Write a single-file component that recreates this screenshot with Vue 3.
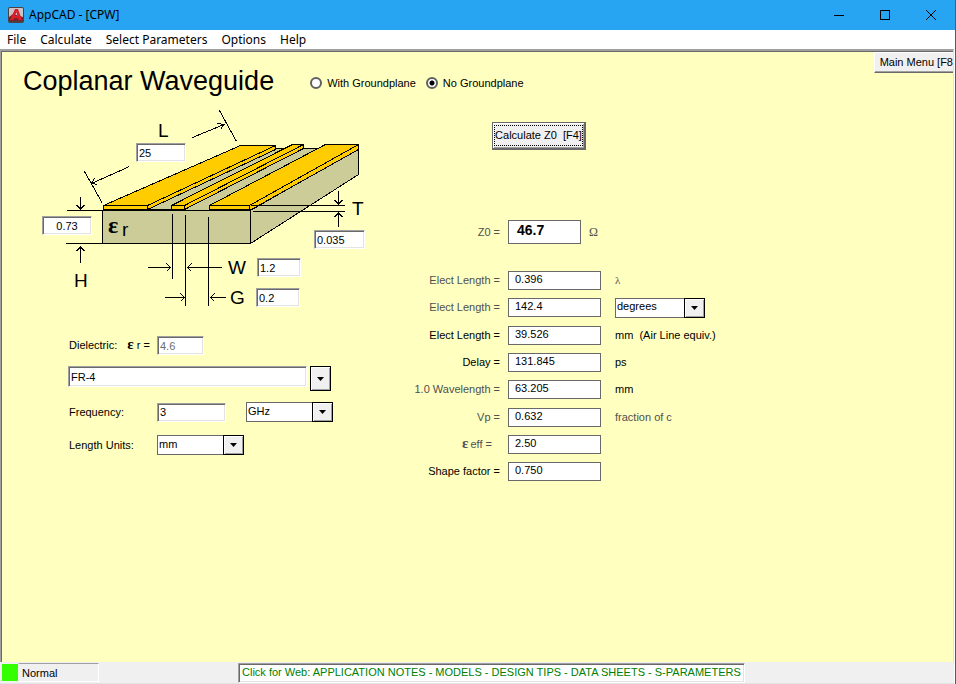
<script setup>
import { ref } from 'vue'

const menus = ['File', 'Calculate', 'Select Parameters', 'Options', 'Help']

const ground = ref('none')
const dims = ref([
  { id: 'length', name: 'L', value: '25' },
  { id: 'height', name: 'H', value: '0.73' },
  { id: 'thickness', name: 'T', value: '0.035' },
  { id: 'width', name: 'W', value: '1.2' },
  { id: 'space', name: 'G', value: '0.2' },
])

const er = ref('4.6')
const material = ref('FR-4')
const frequency = ref('3')
const frequencyUnit = ref('GHz')
const lengthUnit = ref('mm')
const angleUnit = ref('degrees')

const groups = [
  [
    { id: 'lambda', label: 'Elect Length =', value: '0.396', unit: 'λ', dim: true, serif: true },
    { id: 'angle', label: 'Elect Length =', value: '142.4', picker: true, dim: true },
  ],
  [
    { id: 'air', label: 'Elect Length =', value: '39.526', unit: 'mm  (Air Line equiv.)' },
    { id: 'delay', label: 'Delay =', value: '131.845', unit: 'ps' },
    { id: 'wave', label: '1.0 Wavelength =', value: '63.205', unit: 'mm', dim: true },
  ],
  [
    { id: 'vp', label: 'Vp =', value: '0.632', unit: 'fraction of c', dim: true, dimUnit: true },
    { id: 'eff', label: 'eff =', value: '2.50', epsilon: true, dim: true },
    { id: 'shape', label: 'Shape factor =', value: '0.750' },
  ],
]
</script>

<template>
  <div class="window">
    <header class="titlebar">
      <svg class="logo" viewBox="0 0 16 16" width="16" height="16" aria-hidden="true">
        <rect width="16" height="16" rx="2" fill="#4b4044" />
        <rect x="1" y="1" width="14" height="13" rx="1" fill="#c9c4c8" />
        <path d="M1 14V10l4-3 10 3v4z" fill="#7d2128" />
        <path d="M7 2H10L14 13H10.500L10 11H6.500L5 13H2Z M8.500 5L7 9H9.500Z" fill="#d81f2a" fill-rule="evenodd" />
      </svg>
      <span class="caption">AppCAD - [CPW]</span>
      <div class="controls">
        <button type="button" aria-label="Minimize">
          <svg viewBox="0 0 10 10" width="10" height="10"><path d="M0 5.5H10" /></svg>
        </button>
        <button type="button" aria-label="Maximize">
          <svg viewBox="0 0 10 10" width="10" height="10"><path d="M.5 .5H9.5V9.5H.5Z" /></svg>
        </button>
        <button type="button" aria-label="Close">
          <svg class="smooth" viewBox="0 0 10 10" width="10" height="10"><path d="M0 0L10 10M10 0L0 10" /></svg>
        </button>
      </div>
    </header>

    <nav class="menubar">
      <button v-for="m in menus" :key="m" type="button">{{ m }}</button>
    </nav>

    <main class="workspace">
      <div class="heading">
        <h1>Coplanar Waveguide</h1>
        <div class="radios">
          <label><input v-model="ground" type="radio" name="ground" value="with" />With Groundplane</label>
          <label><input v-model="ground" type="radio" name="ground" value="none" />No Groundplane</label>
        </div>
        <button type="button" class="main-menu">Main Menu [F8</button>
      </div>

      <div class="columns">
        <section class="left">
          <div class="diagram">
            <svg viewBox="2 110 388 202" width="388" height="202" aria-hidden="true">
              <g class="shape">
                <path class="base" d="M103 209.5L240 148.5H358.5L250.5 210.5Z" />
                <path class="base" d="M250.5 210.5L358.5 148.5V174.5L250.5 243.5Z" />
                <path class="base" d="M102.5 210.5H250.5V243.5H102.5Z" />
                <path class="gold" d="M103.5 205.5L240.5 145.5H275.5L147.5 205.5Z" />
                <path class="gold" d="M147.5 205.5L275.5 145.5V149.5L147.5 209.5Z" />
                <path class="gold" d="M103.5 205.5H147.5V209.5H103.5Z" />
                <path class="gold" d="M171.5 205.5L292.5 144.5H303.5L184.5 205.5Z" />
                <path class="gold" d="M184.5 205.5L303.5 144.5V148.5L184.5 209.5Z" />
                <path class="gold" d="M171.5 205.5H184.5V209.5H171.5Z" />
                <path class="gold" d="M209.5 205.5L325.5 144.5H358.5L249.5 205.5Z" />
                <path class="gold" d="M249.5 205.5L358.5 144.5V149.5L249.5 210.5Z" />
                <path class="gold" d="M209.5 205.5H249.5V209.5H209.5Z" />
              </g>
              <g class="lines">
                <path d="M219.5 110.5L236.5 141.5M192.5 137.5L224 124.5M217.5 123.5L224 124.5L220.5 129.5" />
                <path d="M84.5 171.5L102 202.5M129.5 166.5L91.5 183.5M94.5 178.5L91.5 183.5L97.5 184.5" />
                <path d="M67 210.5H103M66 243.5H102" />
                <path d="M80.5 197V209M76.5 205L80.5 209L84.5 205" />
                <path d="M80.5 263V247M76.5 251L80.5 247L84.5 251" />
                <path d="M251 205.5H345M253 211.5H345" />
                <path d="M338.5 191V204M334.5 200L338.5 204L342.5 200" />
                <path d="M338.5 227V213M334.5 217L338.5 213L342.5 217" />
                <path d="M172.5 214V279M185.5 215V306M208.5 217V306" />
                <path d="M148 267.5H170M166.5 263.5L170.5 267.5L166.5 271.5" />
                <path d="M222 267.5H188M191.5 263.5L187.5 267.5L191.5 271.5" />
                <path d="M165 297.5H184M180.5 293.5L184.5 297.5L180.5 301.5" />
                <path d="M226 297.5H211M214.5 293.5L210.5 297.5L214.5 301.5" />
              </g>
              <g class="letters">
                <text x="158" y="137">L</text>
                <text x="74" y="287">H</text>
                <text x="352" y="215">T</text>
                <text x="228" y="274">W</text>
                <text x="230" y="304">G</text>
                <text x="122" y="236">r</text>
                <text x="108" y="233" class="eps">ε</text>
              </g>
            </svg>
            <input
              v-for="d in dims" :key="d.id" v-model="d.value"
              type="text" class="sunken" :class="d.id" :aria-label="d.name"
            />
          </div>

          <form class="params" @submit.prevent>
            <div class="field">
              <label for="er">Dielectric:<span class="symbol">ε</span> r =</label>
              <input id="er" v-model="er" type="text" class="sunken er" disabled />
            </div>
            <div class="field material">
              <input v-model="material" type="text" class="sunken" aria-label="Material" />
              <button type="button" class="arrow" aria-label="Show materials">
                <svg viewBox="0 0 7 4" width="7" height="4"><path d="M0 0H7L3.5 4Z" /></svg>
              </button>
            </div>
            <div class="field frequency">
              <label for="freq">Frequency:</label>
              <input id="freq" v-model="frequency" type="text" class="sunken freq" />
              <span class="combo">
                <select v-model="frequencyUnit" aria-label="Frequency unit"><option>GHz</option></select>
                <span class="arrow"><svg viewBox="0 0 7 4" width="7" height="4"><path d="M0 0H7L3.5 4Z" /></svg></span>
              </span>
            </div>
            <div class="field units">
              <label for="units">Length Units:</label>
              <span class="combo">
                <select id="units" v-model="lengthUnit"><option>mm</option></select>
                <span class="arrow"><svg viewBox="0 0 7 4" width="7" height="4"><path d="M0 0H7L3.5 4Z" /></svg></span>
              </span>
            </div>
          </form>
        </section>

        <section class="right">
          <button type="button" class="calculate"><span>Calculate Z0&nbsp; [F4]</span></button>

          <div class="result impedance">
            <label for="z0" class="dim">Z0 =</label>
            <output id="z0">46.7</output>
            <span class="unit serif dim">Ω</span>
          </div>

          <div class="results">
            <div v-for="(group, i) in groups" :key="i" class="group">
              <div v-for="r in group" :key="r.id" class="result">
                <label :for="r.id" :class="{ dim: r.dim, offset: r.epsilon }">
                  <span v-if="r.epsilon" class="symbol">ε</span>{{ r.label }}
                </label>
                <output :id="r.id">{{ r.value }}</output>
                <span v-if="r.picker" class="combo wide">
                  <select v-model="angleUnit" aria-label="Angle unit"><option>degrees</option></select>
                  <span class="arrow"><svg viewBox="0 0 7 4" width="7" height="4"><path d="M0 0H7L3.5 4Z" /></svg></span>
                </span>
                <span v-else-if="r.unit" class="unit" :class="{ dim: r.dimUnit || r.serif, serif: r.serif }">{{ r.unit }}</span>
              </div>
            </div>
          </div>
        </section>
      </div>
    </main>

    <footer class="statusbar">
      <span class="lamp"></span>
      <span class="state">Normal</span>
      <a href="#" class="web">Click for Web: APPLICATION NOTES - MODELS - DESIGN TIPS - DATA SHEETS - S-PARAMETERS</a>
    </footer>
  </div>
</template>

<style>
body {
  background: #fff;
}
</style>

<style scoped>
.window {
  display: flex;
  flex-direction: column;
  box-sizing: border-box;
  min-height: 100vh;
  border-right: 1px solid #0f6cbd;
  background: #fff;
  color: #000;
  font: 11px/13px "Liberation Sans", Arial, sans-serif;
}

.window *,
.window *::before {
  box-sizing: border-box;
}

button,
input,
select {
  margin: 0;
  padding: 0;
  border: 0;
  border-radius: 0;
  background: none;
  color: inherit;
  font: inherit;
  outline: none;
}

/* Title bar and menu */
.titlebar {
  display: flex;
  align-items: center;
  height: 30px;
  padding-left: 8px;
  background: #27a4f2;
  font: 12px/16px "Noto Sans", sans-serif;
}

.caption {
  margin-left: 5px;
}

.controls {
  display: flex;
  margin-right: 1px;
  margin-left: auto;
}

.controls button {
  display: flex;
  align-items: center;
  justify-content: center;
  width: 46px;
  height: 28px;
}

.controls path {
  fill: none;
  stroke: #000;
  shape-rendering: crispEdges;
}

.controls .smooth path {
  shape-rendering: auto;
}

.menubar {
  display: flex;
  gap: 14px;
  height: 19px;
  padding-left: 7px;
  font: 12px/19px "Noto Sans", sans-serif;
}

/* Work area */
.workspace {
  display: flex;
  flex: 1;
  flex-direction: column;
  margin-right: 1px;
  border-style: solid;
  border-color: #a0a0a0 #e3e3e3 #e3e3e3 #a0a0a0;
  border-width: 2px 1px 0 1px;
  box-shadow: inset 1px 1px #696969;
  padding: 1px 0 0 1px;
  background: #ffffc0;
}

.heading {
  display: flex;
  align-items: center;
  height: 58px;
  padding-left: 21px;
}

h1 {
  margin: 0;
  font-size: 27px;
  font-weight: normal;
  line-height: 32px;
  white-space: nowrap;
}

.radios {
  display: flex;
  gap: 10px;
  margin-top: 4px;
  margin-left: 36px;
}

.radios label {
  display: flex;
  align-items: center;
  gap: 5px;
  white-space: nowrap;
}

.radios input {
  width: 12px;
  height: 12px;
  border: 2px solid #606060;
  border-radius: 50%;
  background: #fff;
  appearance: none;
}

.radios input:checked {
  background: radial-gradient(circle, #000 2px, #fff 3px);
}

.main-menu {
  align-self: flex-start;
  height: 21px;
  margin-left: auto;
  padding-left: 5px;
  border: solid;
  border-width: 1px 0 1px 1px;
  border-color: #fff #fff #696969 #fff;
  background: #f0f0f0;
  box-shadow: inset 0 -1px #a0a0a0;
  white-space: nowrap;
}

.columns {
  display: flex;
}

.left {
  width: 388px;
}

.diagram {
  position: relative;
}

.diagram svg {
  display: block;
}

.shape path {
  stroke: #000;
  stroke-linejoin: bevel;
  shape-rendering: crispEdges;
}

.base {
  fill: #cccc99;
}

.gold {
  fill: #ffcc00;
}

.lines path {
  fill: none;
  stroke: #000;
  shape-rendering: crispEdges;
}

.letters {
  font-size: 19px;
}

.letters .eps {
  font: bold 24px "Liberation Serif", serif;
}

.sunken {
  height: 19px;
  padding: 0 2px;
  border: 1px solid;
  border-color: #a0a0a0 #fff #fff #a0a0a0;
  background: #fff;
  box-shadow: inset 1px 1px #696969, inset -1px -1px #e3e3e3;
}

.diagram .sunken {
  position: absolute;
}

.diagram .length {
  left: 134px;
  top: 33px;
  width: 50px;
}

.diagram .height {
  left: 40px;
  top: 106px;
  width: 50px;
  text-align: center;
}

.diagram .thickness {
  left: 312px;
  top: 120px;
  width: 51px;
}

.diagram .width {
  left: 255px;
  top: 148px;
  width: 44px;
}

.diagram .space {
  left: 254px;
  top: 178px;
  width: 44px;
}

.params {
  display: flex;
  flex-direction: column;
  gap: 11px;
  margin-top: 24px;
  padding-left: 66px;
}

.field {
  display: flex;
  align-items: center;
}

.field label {
  width: 88px;
  padding-left: 1px;
  margin-right: 1px;
  white-space: pre;
}

.symbol {
  display: inline-block;
  margin-left: 10px;
  font: bold 15px/10px "Liberation Serif", serif;
}

.er {
  width: 47px;
  color: #6d6d6d;
}

.material {
  align-items: flex-start;
  gap: 3px;
}

.material input {
  width: 239px;
  height: 21px;
}

.material .arrow {
  height: 25px;
}

.frequency .freq {
  width: 69px;
  margin-right: 20px;
}

.units {
  margin-top: 2px;
}

.combo {
  display: flex;
  width: 87px;
  height: 20px;
  position: relative;
}

.combo.wide {
  width: 90px;
}

.combo select {
  width: 100%;
  padding: 0 22px 2px 1px;
  border: 1px solid #696969;
  background: #fff;
  appearance: none;
}

.arrow {
  display: flex;
  align-items: center;
  justify-content: center;
  width: 21px;
  border: 1px solid #000;
  background: #f0f0f0;
  box-shadow: inset 1px 1px #fff, inset -1px -1px #a0a0a0;
}

.combo .arrow {
  position: absolute;
  top: 0;
  right: 0;
  bottom: 0;
  pointer-events: none;
}

/* Results */
.right {
  flex: 1;
  padding-top: 12px;
}

.calculate {
  display: block;
  width: 94px;
  height: 28px;
  margin-left: 102px;
  padding: 2px 1px;
  border: solid #696969;
  border-width: 1px 2px 2px 1px;
  background: #f0f0f0;
  box-shadow: inset 1px 1px #fff, inset -1px -1px #a0a0a0;
  white-space: nowrap;
}

.calculate span {
  display: flex;
  align-items: center;
  justify-content: center;
  height: 100%;
  border: 1px dotted #000;
}

.result {
  display: grid;
  grid-template-rows: 100%;
  grid-template-columns: 110px 93px auto;
  column-gap: 8px;
  align-items: center;
  height: 19px;
}

.result label {
  text-align: right;
  white-space: nowrap;
}

.result .offset {
  padding-right: 8px;
}

.offset .symbol {
  margin: 0 2px 0 0;
}

output {
  height: 19px;
  padding: 1px 6px;
  border: 1px solid #696969;
  background: #fff;
}

.unit,
.result .combo {
  margin-left: 6px;
  white-space: pre;
}

.dim {
  color: #505050;
}

.serif {
  font-family: "Liberation Serif", serif;
}

.impedance {
  grid-template-columns: 110px 73px auto;
  height: 24px;
  margin-top: 70px;
}

.impedance output {
  height: 24px;
  padding-left: 8px;
  font-size: 14px;
  font-weight: bold;
  line-height: 16px;
}

.impedance .unit {
  margin-left: 0;
  font-size: 12px;
}

.results {
  display: flex;
  flex-direction: column;
  gap: 9px;
  margin-top: 27px;
}

.group {
  display: flex;
  flex-direction: column;
  gap: 8px;
}

/* Status bar */
.statusbar {
  display: flex;
  align-items: center;
  height: 22px;
  margin-right: 1px;
  padding-left: 2px;
  border-bottom: 1px solid #e3e3e3;
  background: #f0f0f0;
}

.lamp {
  width: 16px;
  height: 17px;
  background: #33ff00;
}

.state {
  width: 81px;
  height: 19px;
  padding: 3px;
  border: 1px solid;
  border-color: #a0a0a0 #fff #fff #f0f0f0;
}

.web {
  height: 20px;
  margin-left: 139px;
  padding: 1px 3px;
  border: 1px solid;
  border-color: #a0a0a0 #fff #fff #a0a0a0;
  background: #fff;
  box-shadow: inset 1px 1px #696969, inset -1px -1px #e3e3e3;
  color: #008000;
  line-height: 15px;
  text-decoration: none;
  white-space: nowrap;
}
</style>
